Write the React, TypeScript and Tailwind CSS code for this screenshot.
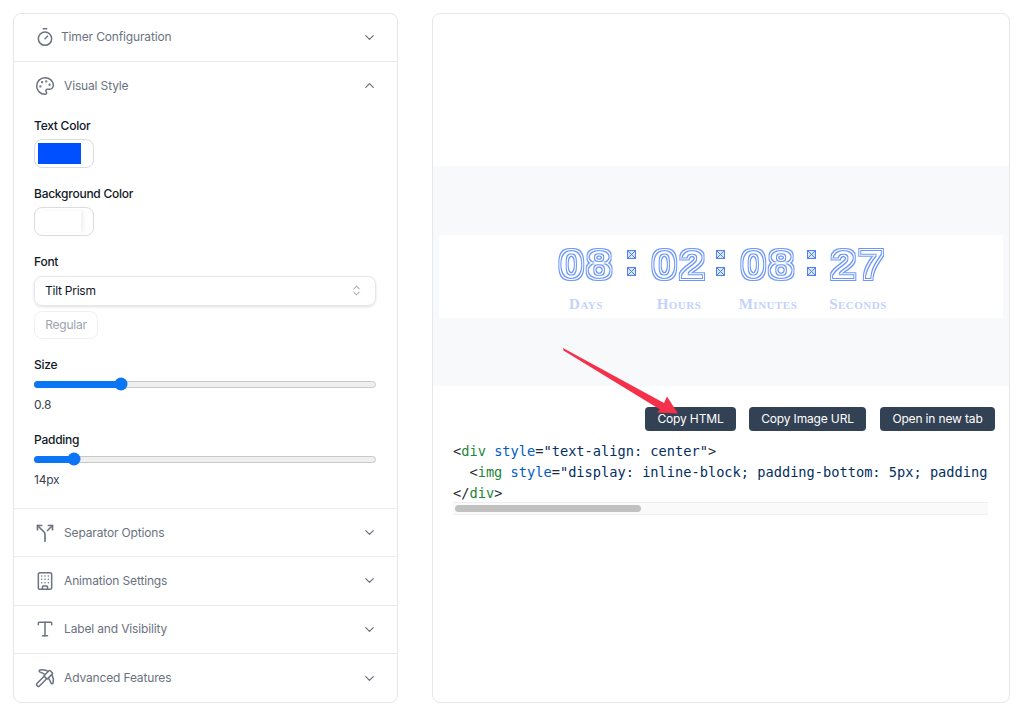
import { ChevronDown, ChevronUp, ChevronsUpDown, Timer, Palette, Split, Building, Type, Pickaxe } from 'lucide-react'
import type { ReactNode } from 'react'

function Row({ icon, title, open, gap = 'gap-[9px]', height = 'h-[48.4px]' }: { icon: ReactNode; title: string; open?: boolean; gap?: string; height?: string }) {
  return (
    <div className={`flex items-center justify-between pl-[21px] pr-[20px] ${height}`}>
      <div className={`flex items-center ${gap}`}>
        {icon}
        <span className="text-[12px] tracking-[-0.15px] text-[#6b7280]">{title}</span>
      </div>
      {open ? (
        <ChevronUp className="h-[15px] w-[15px] text-[#6b7280]" />
      ) : (
        <ChevronDown className="h-[15px] w-[15px] text-[#6b7280]" />
      )}
    </div>
  )
}

function Swatch({ color }: { color: string }) {
  return (
    <div className="mt-[3px] h-[29px] w-[60px] rounded-lg border border-[#d9dce1] p-[3px]">
      <div className={`h-[21px] w-[43px] ${color}`} />
    </div>
  )
}

function Slider({ pct }: { pct: number }) {
  return (
    <div className="relative mt-[6px] h-[7px] rounded-full border border-[#c9c9c9] bg-[#efefef]">
      <div className="absolute -left-px -top-px h-[7px] rounded-full bg-[#0b76f5]" style={{ width: `${pct}%` }} />
      <div
        className="absolute top-1/2 h-[13px] w-[13px] -translate-x-1/2 -translate-y-1/2 rounded-full bg-[#0b76f5]"
        style={{ left: `${pct}%` }}
      />
    </div>
  )
}

function Unit({ value, label }: { value: string; label: string }) {
  return (
    <div className="flex w-[60px] flex-col items-center">
      <span className="inline-block scale-x-[1.1] text-[42px] font-bold leading-[38px] tracking-[2px] text-black [filter:url(#prism)] [font-family:'Liberation_Sans',sans-serif]">
        {value}
      </span>
      <span className="mt-[12px] whitespace-nowrap text-[15px] font-bold leading-[16px] tracking-[0.5px] text-[#c3d3fb] [font-family:'Liberation_Serif',serif] [font-variant:small-caps]">
        {label}
      </span>
    </div>
  )
}

function Dots({ width }: { width: string }) {
  return (
    <div className={`flex h-[38px] flex-col items-center justify-center gap-[8px] pb-[3px] ${width}`}>
      {[0, 1].map((i) => (
        <svg key={i} width="9" height="9" viewBox="0 0 9 9" fill="#dbe6fe" stroke="#4f82f6" strokeWidth="1">
          <rect x="0.5" y="0.5" width="8" height="8" />
          <path d="M0.5 0.5L8.5 8.5M8.5 0.5L0.5 8.5" />
        </svg>
      ))}
    </div>
  )
}

const Tag = ({ children }: { children: ReactNode }) => <span className="text-[#22863a]">{children}</span>
const Attr = ({ children }: { children: ReactNode }) => <span className="text-[#005cc5]">{children}</span>
const Str = ({ children }: { children: ReactNode }) => <span className="text-[#032f62]">{children}</span>

const iconClass = 'h-[20px] w-[20px] text-[#6b7280]'

export default function App() {
  return (
    <div className="relative flex h-[719px] w-[1024px] items-start gap-[34px] overflow-hidden bg-white pl-[13px] pt-[13px] [font-family:Inter,sans-serif]">
      <svg className="absolute h-0 w-0">
        <filter id="prism" x="-20%" y="-20%" width="140%" height="140%" colorInterpolationFilters="sRGB">
          <feMorphology in="SourceAlpha" operator="dilate" radius="2" result="d2" />
          <feMorphology in="SourceAlpha" operator="dilate" radius="1" result="d1" />
          <feMorphology in="SourceAlpha" operator="erode" radius="1" result="e1" />
          <feComposite in="d2" in2="d1" operator="out" result="outer" />
          <feComposite in="SourceAlpha" in2="e1" operator="out" result="inner" />
          <feMerge result="rings">
            <feMergeNode in="outer" />
            <feMergeNode in="inner" />
          </feMerge>
          <feFlood floodColor="#6b96f8" />
          <feComposite in2="rings" operator="in" />
        </filter>
      </svg>

      {/* settings accordion */}
      <div className="w-[385px] divide-y divide-[#e9ebee] rounded-lg border border-[#e5e7eb]">
        <Row icon={<Timer className={iconClass} strokeWidth={1.8} />} title="Timer Configuration" gap="gap-[6px]" height="h-[47.5px]" />
        <div>
          <Row icon={<Palette className={iconClass} strokeWidth={1.8} />} title="Visual Style" open />
          <div className="pb-[18px] pl-[20px] pr-[21px] pt-[6px] text-[12px] font-medium leading-[20px] tracking-[-0.25px] text-[#111827]">
            <div>Text Color</div>
            <Swatch color="bg-[#0050ff]" />
            <div className="mt-[16px]">Background Color</div>
            <Swatch color="bg-white shadow-[3px_0_3px_rgba(0,0,0,0.05)]" />
            <div className="mt-[16px]">Font</div>
            <div className="mt-[4px] flex h-[30px] items-center justify-between rounded-lg border border-[#e5e7eb] pl-[10px] pr-[12px] font-normal shadow-sm">
              Tilt Prism
              <ChevronsUpDown className="h-[13px] w-[13px] text-[#6b7280]" strokeWidth={1.5} />
            </div>
            <div className="mt-[5px] flex h-[28px] w-[64px] items-center justify-center rounded-lg border border-[#eef0f2] font-normal text-[#9ca3af]">
              Regular
            </div>
            <div className="mt-[16px]">Size</div>
            <Slider pct={25.2} />
            <div className="mt-[7px] font-normal text-[#374151]">0.8</div>
            <div className="mt-[15px]">Padding</div>
            <Slider pct={11.6} />
            <div className="mt-[7px] font-normal text-[#374151]">14px</div>
          </div>
        </div>
        <Row icon={<Split className={iconClass} strokeWidth={2} />} title="Separator Options" />
        <Row icon={<Building className={iconClass} strokeWidth={1.8} />} title="Animation Settings" />
        <Row icon={<Type className={iconClass} strokeWidth={1.8} />} title="Label and Visibility" />
        <Row icon={<Pickaxe className={iconClass} strokeWidth={1.8} />} title="Advanced Features" />
      </div>

      {/* preview */}
      <div className="h-[690px] w-[578px] rounded-lg border border-[#e5e7eb] pt-[152px]">
        <div className="flex h-[220px] items-center bg-[#f8f9fb] px-[6px]">
          <div className="flex h-[83px] w-full items-center justify-center bg-white pl-[2px]">
            <div className="flex items-start pt-[5px]">
              <Unit value="08" label="Days" />
              <Dots width="w-[33px] pr-[3px]" />
              <Unit value="02" label="Hours" />
              <Dots width="w-[29px] pr-[7px]" />
              <Unit value="08" label="Minutes" />
              <Dots width="w-[30px] pr-[4px]" />
              <Unit value="27" label="Seconds" />
            </div>
          </div>
        </div>
        <div className="mt-[21px] flex justify-end gap-[14px] pr-[14px] text-[12px] tracking-[-0.15px] text-white">
          <button className="-mr-px h-[24px] w-[91px] rounded-[4px] bg-[#334155]">Copy HTML</button>
          <button className="h-[24px] w-[117px] rounded-[4px] bg-[#334155]">Copy Image URL</button>
          <button className="h-[24px] w-[115px] rounded-[4px] bg-[#334155]">Open in new tab</button>
        </div>
        <div className="ml-[20px] mt-[10px] w-[535px]">
          <pre className="overflow-hidden text-[13.67px] leading-[21px] text-[#24292e] [font-family:'DejaVu_Sans_Mono',monospace]">
            {'<'}
            <Tag>div</Tag> <Attr>style</Attr>=<Str>"text-align: center"</Str>
            {'>\n  <'}
            <Tag>img</Tag> <Attr>style</Attr>=<Str>"display: inline-block; padding-bottom: 5px; padding-top: 5px;"</Str>
            {'>\n</'}
            <Tag>div</Tag>
            {'>'}
          </pre>
          <div className="mt-[-2px] h-[13px] border-y border-[#eeeeee] bg-[#fafafa] px-[2px] pt-[2px]">
            <div className="h-[7px] w-[186px] rounded-full bg-[#c1c1c1]" />
          </div>
        </div>
      </div>

      {/* annotation arrow */}
      <svg className="absolute left-0 top-0" width="1024" height="719" fill="none">
        <path d="M563 348L563.5 350.5L660 409.5L657 412.5L678 413.5L667 396.5L664 403Z" fill="#f5304a" />
      </svg>
    </div>
  )
}
